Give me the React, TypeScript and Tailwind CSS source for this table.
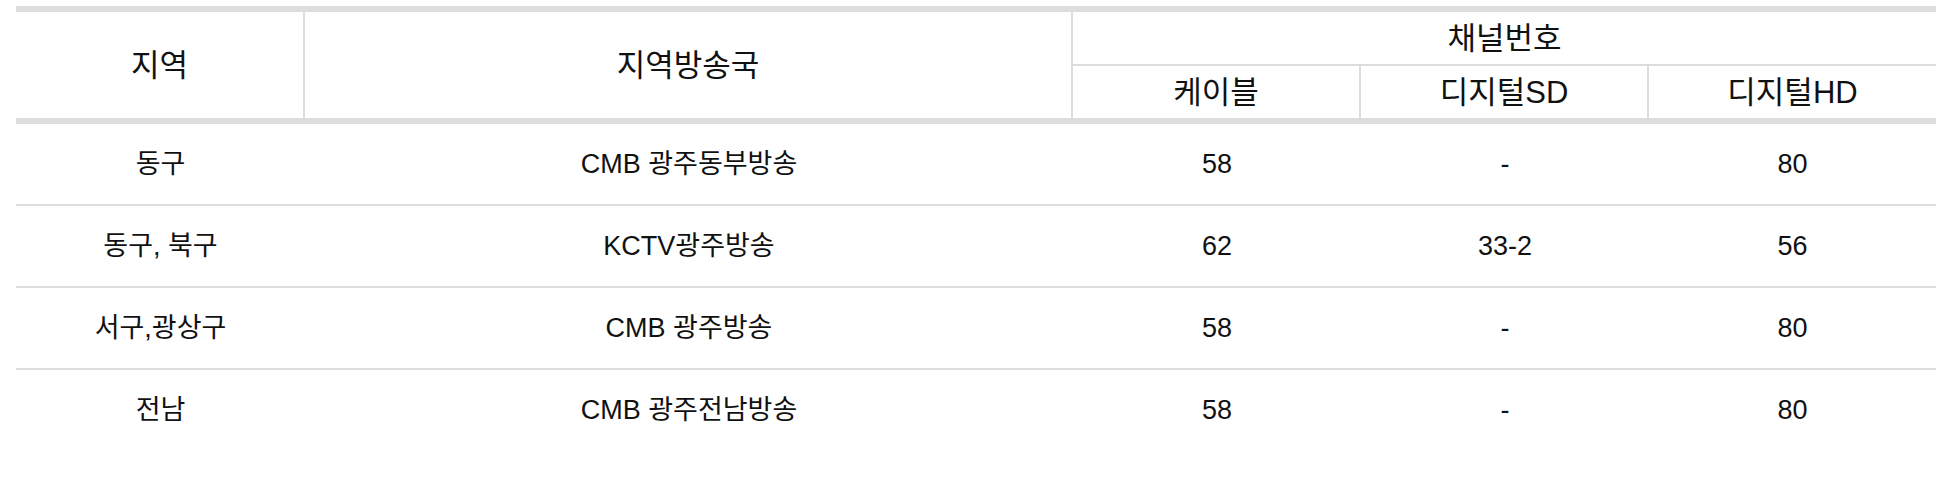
const rows = [
  { area: '동구', station: 'CMB 광주동부방송', cable: '58', sd: '-', hd: '80' },
  { area: '동구, 북구', station: 'KCTV광주방송', cable: '62', sd: '33-2', hd: '56' },
  { area: '서구,광상구', station: 'CMB 광주방송', cable: '58', sd: '-', hd: '80' },
  { area: '전남', station: 'CMB 광주전남방송', cable: '58', sd: '-', hd: '80' },
];

export default function App() {
  return (
    <div className="bg-white min-h-[484px] pt-[6px] pl-4 font-['Liberation_Sans','Noto_Sans_CJK_KR',sans-serif] text-[#111]">
      <table className="w-[1920px] table-fixed border-separate border-spacing-0 text-center">
        <colgroup>
          <col className="w-[289px]" />
          <col className="w-[768px]" />
          <col className="w-[288px]" />
          <col className="w-[288px]" />
          <col className="w-[287px]" />
        </colgroup>
        <thead className="text-[31px] leading-none">
          <tr className="h-[60px]">
            <th
              rowSpan={2}
              className="p-0 font-normal border-t-[6px] border-b-[6px] border-r-2 border-[#dddddd]"
            >
              지역
            </th>
            <th
              rowSpan={2}
              className="p-0 font-normal border-t-[6px] border-b-[6px] border-r-2 border-[#dddddd]"
            >
              지역방송국
            </th>
            <th colSpan={3} className="p-0 font-normal border-t-[6px] border-b-2 border-[#dddddd]">
              채널번호
            </th>
          </tr>
          <tr className="h-[58px]">
            <th className="p-0 font-normal border-b-[6px] border-r-2 border-[#dddddd]">케이블</th>
            <th className="p-0 font-normal border-b-[6px] border-r-2 border-[#dddddd]">디지털SD</th>
            <th className="p-0 font-normal border-b-[6px] border-[#dddddd]">디지털HD</th>
          </tr>
        </thead>
        <tbody className="text-[27px] leading-none">
          {rows.map((r, i) => (
            <tr key={i} className={i < rows.length - 1 ? 'h-[82px]' : 'h-[80px]'}>
              {[r.area, r.station, r.cable, r.sd, r.hd].map((v, j) => (
                <td
                  key={j}
                  className={
                    i < rows.length - 1
                      ? 'p-0 border-b-2 border-[#dddddd]'
                      : 'p-0'
                  }
                >
                  {v}
                </td>
              ))}
            </tr>
          ))}
        </tbody>
      </table>
    </div>
  );
}
